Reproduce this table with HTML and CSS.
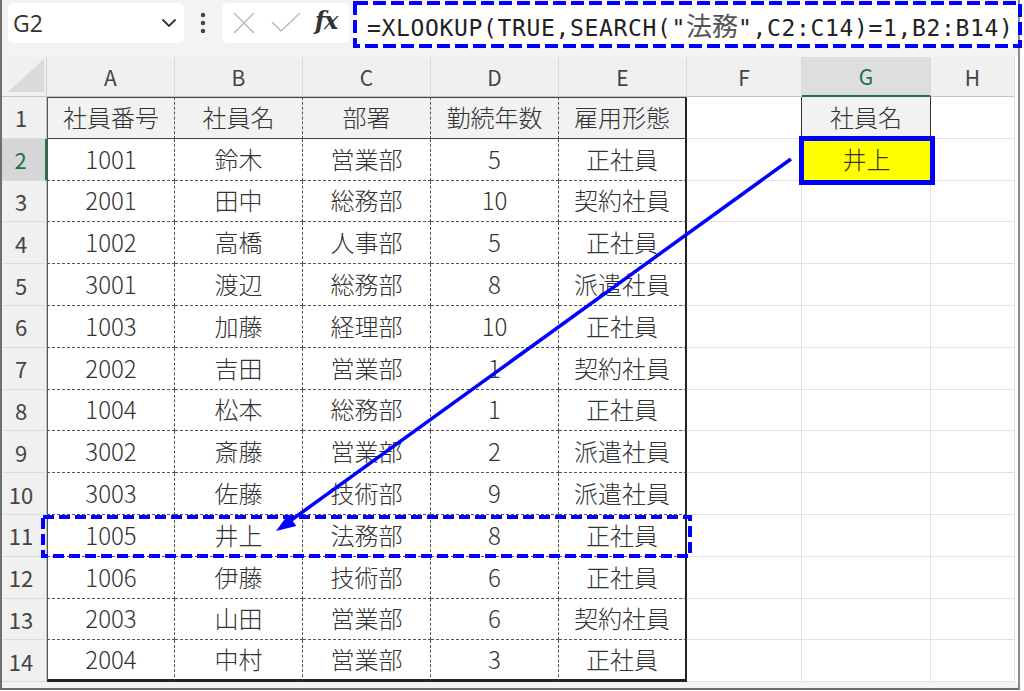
FILE: index.html
```html
<!DOCTYPE html>
<html lang="ja">
<head>
<meta charset="utf-8">
<link rel="stylesheet" href="styles.css">
</head>
<body>
<div class="frame">
  <div class="topbar">
    <div class="namebox">
      <span class="nb-text">G2</span>
      <svg class="chev" width="16" height="10" viewBox="0 0 16 10"><path d="M1.5 1.5 L8 8 L14.5 1.5" fill="none" stroke="#333" stroke-width="1.8"/></svg>
    </div>
    <div class="kebab">
      <svg width="6" height="22" viewBox="0 0 6 22"><circle cx="3" cy="3" r="2.2" fill="#444"/><circle cx="3" cy="11" r="2.2" fill="#444"/><circle cx="3" cy="19" r="2.2" fill="#444"/></svg>
    </div>
    <div class="fxbox">
      <svg class="ic-x" width="24" height="24" viewBox="0 0 24 24"><path d="M2 2 L22 22 M22 2 L2 22" stroke="#bdbdbd" stroke-width="1.6" fill="none"/></svg>
      <svg class="ic-ok" width="30" height="24" viewBox="0 0 30 24"><path d="M1 11 L10 20 L29 2" stroke="#bdbdbd" stroke-width="1.6" fill="none"/></svg>
      <span class="fx">fx</span>
    </div>
    <div class="formula">
      <svg class="fdash" width="669" height="47" viewBox="0 0 669 47"><rect x="2" y="2" width="665" height="43" fill="none" stroke="#0000ff" stroke-width="4" stroke-dasharray="13 5"/></svg>
      <span class="ftext">=XLOOKUP(TRUE,SEARCH("<span class="fj">法務</span>",C2:C14)=1,B2:B14)</span>
    </div>
  </div>

  <div class="sheet">
    <div class="corner"><svg width="36" height="33" viewBox="0 0 36 33"><polygon points="36,0 36,33 0,33" fill="#dadada"/></svg></div>
    <div class="ch">A</div><div class="ch">B</div><div class="ch">C</div><div class="ch">D</div><div class="ch">E</div><div class="ch">F</div><div class="ch sel">G</div><div class="ch">H</div>

    <div class="rh">1</div>
    <div class="t h a">社員番号</div><div class="t h">社員名</div><div class="t h">部署</div><div class="t h">勤続年数</div><div class="t h e">雇用形態</div>
    <div class="g f1"></div><div class="g g1">社員名</div><div class="g"></div>

    <div class="rh sel">2</div>
    <div class="t a">1001</div><div class="t">鈴木</div><div class="t">営業部</div><div class="t">5</div><div class="t e">正社員</div>
    <div class="g"></div><div class="g g2"><span>井上</span></div><div class="g"></div>

    <div class="rh">3</div>
    <div class="t a">2001</div><div class="t">田中</div><div class="t">総務部</div><div class="t">10</div><div class="t e">契約社員</div>
    <div class="g"></div><div class="g"></div><div class="g"></div>

    <div class="rh">4</div>
    <div class="t a">1002</div><div class="t">高橋</div><div class="t">人事部</div><div class="t">5</div><div class="t e">正社員</div>
    <div class="g"></div><div class="g"></div><div class="g"></div>

    <div class="rh">5</div>
    <div class="t a">3001</div><div class="t">渡辺</div><div class="t">総務部</div><div class="t">8</div><div class="t e">派遣社員</div>
    <div class="g"></div><div class="g"></div><div class="g"></div>

    <div class="rh">6</div>
    <div class="t a">1003</div><div class="t">加藤</div><div class="t">経理部</div><div class="t">10</div><div class="t e">正社員</div>
    <div class="g"></div><div class="g"></div><div class="g"></div>

    <div class="rh">7</div>
    <div class="t a">2002</div><div class="t">吉田</div><div class="t">営業部</div><div class="t">1</div><div class="t e">契約社員</div>
    <div class="g"></div><div class="g"></div><div class="g"></div>

    <div class="rh">8</div>
    <div class="t a">1004</div><div class="t">松本</div><div class="t">総務部</div><div class="t">1</div><div class="t e">正社員</div>
    <div class="g"></div><div class="g"></div><div class="g"></div>

    <div class="rh">9</div>
    <div class="t a">3002</div><div class="t">斎藤</div><div class="t">営業部</div><div class="t">2</div><div class="t e">派遣社員</div>
    <div class="g"></div><div class="g"></div><div class="g"></div>

    <div class="rh">10</div>
    <div class="t a">3003</div><div class="t">佐藤</div><div class="t">技術部</div><div class="t">9</div><div class="t e">派遣社員</div>
    <div class="g"></div><div class="g"></div><div class="g"></div>

    <div class="rh">11</div>
    <div class="t a">1005</div><div class="t">井上</div><div class="t">法務部</div><div class="t">8</div><div class="t e">正社員</div>
    <div class="g"></div><div class="g"></div><div class="g"></div>

    <div class="rh">12</div>
    <div class="t a">1006</div><div class="t">伊藤</div><div class="t">技術部</div><div class="t">6</div><div class="t e">正社員</div>
    <div class="g"></div><div class="g"></div><div class="g"></div>

    <div class="rh">13</div>
    <div class="t a">2003</div><div class="t">山田</div><div class="t">営業部</div><div class="t">6</div><div class="t e">契約社員</div>
    <div class="g"></div><div class="g"></div><div class="g"></div>

    <div class="rh">14</div>
    <div class="t a l">2004</div><div class="t l">中村</div><div class="t l">営業部</div><div class="t l">3</div><div class="t e l">正社員</div>
    <div class="g"></div><div class="g"></div><div class="g"></div>
  </div>

  <svg class="annot" width="1024" height="691" viewBox="0 0 1024 691">
    <rect x="43" y="517" width="647" height="39" fill="none" stroke="#0000ff" stroke-width="4" stroke-dasharray="11 5"/>
    <line x1="791" y1="159" x2="290" y2="521" stroke="#0000ff" stroke-width="3.5"/>
    <polygon points="276,531 296.3,525.9 288.1,514.5" fill="#0000ff"/>
  </svg>
</div>
</body>
</html>
```

FILE: styles.css
```css
* {
  box-sizing: border-box;
  margin: 0;
  padding: 0;
}

html, body {
  width: 1024px;
  height: 691px;
  overflow: hidden;
  background: #ffffff;
}

body {
  font-family: "Noto Sans CJK JP", "Noto Sans", sans-serif;
  color: #333333;
}

.frame {
  position: relative;
  width: 1020px;
  height: 690px;
  border-left: 2px solid #6e6e6e;
  border-right: 2px solid #8a8a8a;
  border-bottom: 2px solid #6e6e6e;
  background: #f3f3f3;
}

/* ---------- top bar ---------- */
.topbar {
  display: flex;
  align-items: flex-start;
  height: 57px;
  padding: 3px 0 0 6px;
}

.namebox {
  display: flex;
  align-items: center;
  justify-content: space-between;
  width: 177px;
  height: 40px;
  padding: 0 7px 0 5px;
  background: #ffffff;
  border-radius: 6px;
}

.nb-text {
  font-family: "Open Sans", "Noto Sans", sans-serif;
  font-size: 23px;
  color: #333333;
}

.kebab {
  display: flex;
  align-items: center;
  justify-content: center;
  width: 38px;
  height: 40px;
}

.fxbox {
  display: flex;
  align-items: center;
  width: 128px;
  height: 40px;
  padding-left: 10px;
  background: #ffffff;
  border-radius: 6px;
}

.ic-x {
  margin-right: 15px;
}

.ic-ok {
  margin-right: 14px;
}

.fx {
  font-family: "DejaVu Serif", "Liberation Serif", serif;
  font-style: italic;
  font-weight: bold;
  font-size: 24px;
  color: #333333;
  letter-spacing: -1px;
  line-height: 1;
  margin-top: -4px;
}

.formula {
  position: relative;
  display: flex;
  align-items: center;
  width: 669px;
  height: 47px;
  margin-left: 4px;
  margin-top: -2px;
  padding-left: 14px;
  background: #ffffff;
}

.fdash {
  position: absolute;
  left: 0;
  top: 0;
}

.ftext {
  font-family: "DejaVu Sans Mono", "Noto Sans CJK JP", monospace;
  font-size: 23px;
  letter-spacing: 0.65px;
  color: #222222;
  white-space: nowrap;
}

.fj {
  font-family: "Noto Sans CJK JP", sans-serif;
  font-size: 26px;
  letter-spacing: 0;
  color: #555555;
}

/* ---------- sheet ---------- */
.sheet {
  display: grid;
  grid-template-columns: 45px repeat(5, 128px) 115px 129px 84px;
  grid-template-rows: 40px repeat(14, 41.8px);
  background: #ffffff;
}

.corner {
  display: flex;
  align-items: flex-end;
  justify-content: flex-end;
  padding: 0 2px 4px 0;
  background: #f0f0f0;
  border-right: 1px solid #d0d0d0;
  border-bottom: 1px solid #c4c4c4;
}

.ch {
  display: flex;
  align-items: center;
  justify-content: center;
  background: #f0f0f0;
  border-right: 1px solid #dadada;
  border-bottom: 1px solid #c4c4c4;
  font-size: 21px;
  color: #444444;
}

.ch.sel {
  background: #dedede;
  border-bottom: 2px solid #217346;
  color: #217346;
}

.rh {
  display: flex;
  align-items: center;
  justify-content: center;
  padding-right: 6px;
  background: #f0f0f0;
  border-right: 1px solid #c4c4c4;
  border-bottom: 1px solid #dcdcdc;
  font-size: 22px;
  color: #444444;
}

.rh.sel {
  background: #d6d6d6;
  border-right: 2px solid #217346;
  color: #217346;
}

.t {
  display: flex;
  align-items: center;
  justify-content: center;
  padding-bottom: 2px;
  background: #ffffff;
  border-right: 1px dashed #555555;
  border-bottom: 1px dashed #555555;
  font-size: 24px;
  font-weight: 300;
  color: #333333;
  white-space: nowrap;
}

.t.h {
  background: #f2f2f2;
  border-top: 1px solid #444444;
  border-bottom: 1px solid #444444;
}

.t.a {
  border-left: 1px solid #555555;
}

.t.e {
  border-right: 2px solid #222222;
}

.t.l {
  border-bottom: 3px solid #222222;
}

.g {
  display: flex;
  align-items: center;
  justify-content: center;
  padding-bottom: 2px;
  background: #ffffff;
  border-right: 1px solid #e1e1e1;
  border-bottom: 1px solid #e1e1e1;
  font-size: 24px;
  font-weight: 300;
  color: #333333;
}

.g.f1 {
  border-right: 1px solid #333333;
}

.g.g1 {
  background: #f2f2f2;
  border-right: 1px solid #333333;
}

.g.g2 {
  position: relative;
  background: #ffff00;
  border-right: none;
}

.g.g2::after {
  content: "";
  position: absolute;
  left: -3px;
  right: -4px;
  top: -3px;
  bottom: -5px;
  border: 5px solid #0000ff;
}

/* ---------- annotations ---------- */
.annot {
  position: absolute;
  left: -2px;
  top: 0;
  pointer-events: none;
}
```
